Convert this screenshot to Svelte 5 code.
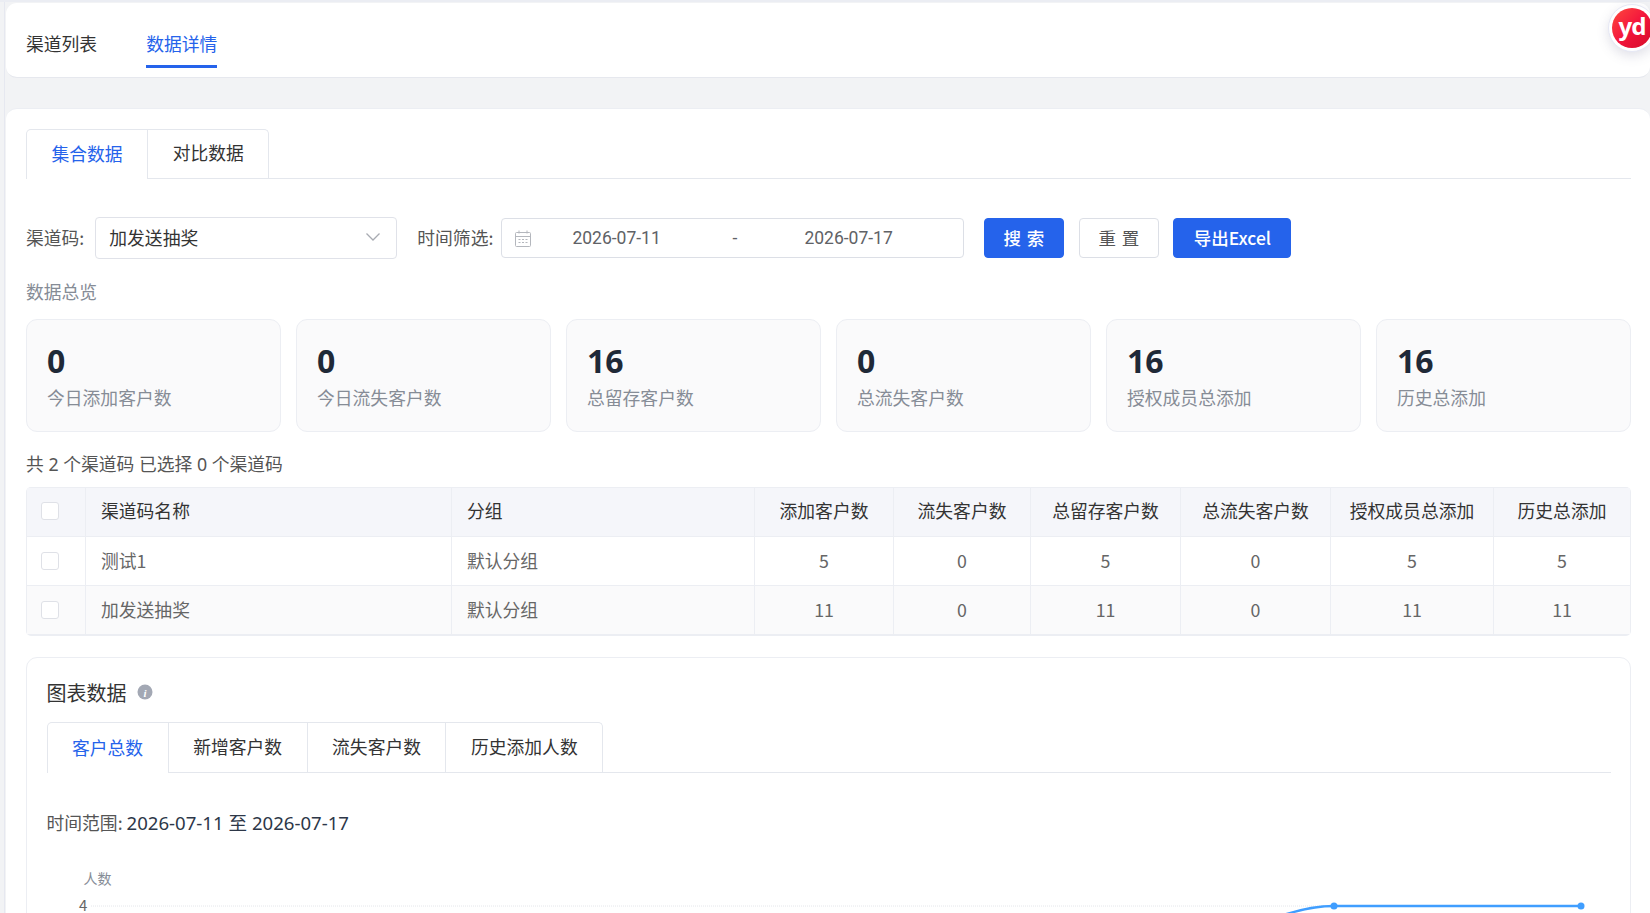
<script>
  const stats = [
    { n: '0', l: '今日添加客户数' },
    { n: '0', l: '今日流失客户数' },
    { n: '16', l: '总留存客户数' },
    { n: '0', l: '总流失客户数' },
    { n: '16', l: '授权成员总添加' },
    { n: '16', l: '历史总添加' }
  ];
  const heads = ['添加客户数', '流失客户数', '总留存客户数', '总流失客户数', '授权成员总添加', '历史总添加'];
  const rows = [
    { name: '测试1', group: '默认分组', v: [5, 0, 5, 0, 5, 5] },
    { name: '加发送抽奖', group: '默认分组', v: [11, 0, 11, 0, 11, 11] }
  ];
  const chartTabs = ['客户总数', '新增客户数', '流失客户数', '历史添加人数'];
</script>

<div class="page">
  <div class="logo"><span>yd</span></div>

  <header class="card top">
    <span class="toptab">渠道列表</span>
    <span class="toptab on">数据详情</span>
  </header>

  <main class="card body">
    <div class="tabs sub">
      <div class="tab on">集合数据</div>
      <div class="tab">对比数据</div>
    </div>

    <div class="filters">
      <label class="lbl">渠道码:</label>
      <div class="select">
        <span>加发送抽奖</span>
        <svg width="16" height="10" viewBox="0 0 16 10"><path d="M1.5 1.5 8 8l6.500-6.500" fill="none" stroke="#a8abb2" stroke-width="1.3"/></svg>
      </div>
      <label class="lbl time">时间筛选:</label>
      <div class="picker">
        <svg width="16" height="17" viewBox="0 0 16 17" fill="none" stroke="#b4b7bd">
          <rect x="0.500" y="2.500" width="15" height="14" rx="1"/>
          <path d="M0.500 6.500h15M4 0.500v3M12 0.500v3"/>
          <path d="M3.500 9.500h2M7 9.500h2M10.500 9.500h2M3.500 12.500h2M7 12.500h2M10.500 12.500h2" stroke-width="1"/>
        </svg>
        <span class="d1">2026-07-11</span>
        <span class="dash">-</span>
        <span class="d2">2026-07-17</span>
      </div>
      <button class="btn primary wide">搜 索</button>
      <button class="btn plain wide">重 置</button>
      <button class="btn primary last">导出Excel</button>
    </div>

    <div class="overview">数据总览</div>

    <div class="stats">
      {#each stats as s}
        <div class="stat">
          <div class="num">{s.n}</div>
          <div class="cap">{s.l}</div>
        </div>
      {/each}
    </div>

    <div class="count">共 2 个渠道码 已选择 0 个渠道码</div>

    <table>
      <colgroup>
        <col style="width:58px" /><col style="width:366px" /><col style="width:303px" /><col style="width:139px" />
        <col style="width:137px" /><col style="width:150px" /><col style="width:150px" /><col style="width:163px" /><col />
      </colgroup>
      <thead>
        <tr>
          <th class="chk"><i></i></th>
          <th class="l">渠道码名称</th>
          <th class="l">分组</th>
          {#each heads as h}<th>{h}</th>{/each}
        </tr>
      </thead>
      <tbody>
        {#each rows as r}
          <tr>
            <td class="chk"><i></i></td>
            <td class="l">{r.name}</td>
            <td class="l">{r.group}</td>
            {#each r.v as c}<td>{c}</td>{/each}
          </tr>
        {/each}
      </tbody>
    </table>

    <section class="chart">
      <div class="title">
        <span>图表数据</span>
        <svg width="16" height="16" viewBox="0 0 16 16"><circle cx="8" cy="8" r="7.500" fill="#a3a8b4"/><text x="8" y="12.500" text-anchor="middle" class="i">i</text></svg>
      </div>
      <div class="tabs ctabs">
        {#each chartTabs as t, i}
          <div class="tab" class:on={i === 0}>{t}</div>
        {/each}
      </div>
      <div class="range"><span class="rl">时间范围:</span> <span class="rv">2026-07-11 至 2026-07-17</span></div>
      <svg class="plot" width="1564" height="53" viewBox="0 0 1564 53">
        <text x="36.500" y="23" class="ax">人数</text>
        <text x="32" y="50" class="ay">4</text>
        <line x1="44" y1="45" x2="1534" y2="45" stroke="#e4e6ea" stroke-dasharray="1 1"/>
        <path d="M1220 60C1250 48 1270 45 1287 45L1534 45" fill="none" stroke="#409eff" stroke-width="2.500"/>
        <circle cx="1287" cy="45" r="3.500" fill="#409eff"/>
        <circle cx="1534" cy="45" r="3.500" fill="#409eff"/>
      </svg>
    </section>
  </main>
</div>

<style>
  :global(html), :global(body) {
    margin: 0;
    height: 913px;
    overflow: hidden;
    background: #f2f3f5;
  }
  .page {
    position: relative;
    height: 913px;
    box-sizing: border-box;
    padding: 3px 0 0 6px;
    overflow: hidden;
    background: #f2f3f5;
    font-family: "Noto Sans CJK SC", "Noto Sans", sans-serif;
    font-size: 17.800px;
    color: #333;
  }
  .page::before {
    content: '';
    position: absolute;
    left: 4px;
    top: 0;
    bottom: 0;
    width: 1px;
    background: #e6e8f0;
  }
  .page::after {
    content: '';
    position: absolute;
    left: 0;
    right: 0;
    top: 0;
    height: 2px;
    background: #ebedf3;
  }
  .card {
    background: #fff;
    border-radius: 11px 11px 0 0;
  }
  .top {
    height: 75px;
    box-sizing: border-box;
    border-radius: 11px;
    border-bottom: 1px solid #e6e8ee;
    padding-left: 20px;
    display: flex;
    gap: 49px;
    align-items: flex-start;
  }
  .toptab {
    height: 65px;
    box-sizing: border-box;
    padding-top: 27px;
    line-height: 26px;
    color: #333;
  }
  .toptab.on {
    color: #2563eb;
    border-bottom: 3px solid #2563eb;
  }
  .body {
    margin-top: 30px;
    height: 810px;
    box-sizing: border-box;
    padding: 19.500px 19px 0 20px;
    border-top: 1px solid #eceef3;
  }
  .tabs {
    display: flex;
    box-sizing: border-box;
    border-bottom: 1px solid #e4e7ed;
  }
  .tab {
    box-sizing: border-box;
    height: 100%;
    border: 1px solid #e4e7ed;
    border-left: 0;
    border-bottom: 0;
    display: flex;
    align-items: center;
    justify-content: center;
    padding: 0 24.500px 3px;
    color: #333;
  }
  .tab:first-child {
    border-left: 1px solid #e4e7ed;
    border-top-left-radius: 5px;
  }
  .tab:last-child {
    border-top-right-radius: 5px;
  }
  .tab.on {
    color: #2563eb;
    background: #fff;
    margin-bottom: -1px;
    height: calc(100% + 1px);
  }
  .sub {
    height: 50px;
  }
  .filters {
    margin-top: 38.500px;
    height: 42px;
    display: flex;
    align-items: center;
  }
  .lbl {
    color: #555;
    white-space: nowrap;
    padding-bottom: 2px;
  }
  .select {
    margin-left: 11px;
    width: 302px;
    height: 42px;
    box-sizing: border-box;
    border: 1px solid #e0e2e9;
    border-radius: 4px;
    display: flex;
    align-items: center;
    justify-content: space-between;
    padding: 0 15px 2px 13px;
    color: #333;
  }
  .time {
    margin-left: 20px;
  }
  .picker {
    margin-left: 8px;
    width: 463px;
    height: 40px;
    box-sizing: border-box;
    border: 1px solid #dcdfe6;
    border-radius: 4px;
    display: flex;
    align-items: center;
    padding-left: 13px;
    color: #606266;
    font-family: Roboto, "Noto Sans CJK SC", sans-serif;
    font-size: 17.500px;
  }
  .d1 {
    margin-left: 41px;
    width: 160px;
  }
  .dash {
    width: 72px;
  }
  .btn {
    height: 40px;
    box-sizing: border-box;
    border-radius: 4px;
    margin-left: 15px;
    padding: 0 0 2px;
    font: inherit;
    font-size: 17.500px;
    width: 118px;
  }
  .filters .btn.wide {
    width: 80px;
    letter-spacing: 1px;
  }
  .filters .picker + .btn {
    margin-left: 20px;
  }
  .filters .btn.last {
    margin-left: 14px;
  }
  .primary {
    background: #2563eb;
    border: 1px solid #2563eb;
    color: #fff;
    font-weight: 500;
  }
  .plain {
    background: #fff;
    border: 1px solid #dcdfe6;
    color: #555;
  }
  .overview {
    margin-top: 20px;
    line-height: 24px;
    color: #868c96;
  }
  .stats {
    margin-top: 16px;
    display: grid;
    grid-template-columns: repeat(6, 1fr);
    gap: 15px;
  }
  .stat {
    height: 113px;
    box-sizing: border-box;
    background: #fafafb;
    border: 1px solid #eceef3;
    border-radius: 11px;
    padding: 20px 0 0 20px;
  }
  .num {
    font-family: "Noto Sans", sans-serif;
    font-size: 32px;
    font-weight: 700;
    line-height: 42px;
    color: #1f2937;
  }
  .cap {
    margin-top: 3px;
    line-height: 24px;
    color: #868c96;
  }
  .count {
    margin-top: 19.500px;
    line-height: 24px;
    color: #555;
    font-family: "Noto Sans", "Noto Sans CJK SC", sans-serif;
  }
  table {
    margin-top: 11.500px;
    width: 1605px;
    table-layout: fixed;
    border-collapse: separate;
    border-spacing: 0;
    border: 1px solid #eceef3;
    border-bottom-width: 2px;
    border-radius: 5px;
    box-sizing: border-box;
  }
  th, td {
    height: 49px;
    box-sizing: border-box;
    padding: 0 0 2px;
    text-align: center;
    font-weight: 400;
    border-left: 1px solid #eceef3;
    border-top: 1px solid #eceef3;
  }
  th {
    height: 48px;
    padding-bottom: 4px;
    background: #f5f6fa;
    color: #333;
    border-top: 0;
  }
  td {
    color: #666;
  }
  th:first-child, td:first-child {
    border-left: 0;
  }
  tbody tr:nth-child(2) td {
    background: #fafafb;
  }
  .l, th.l {
    text-align: left;
    padding-left: 15px;
  }
  .chk, th.chk {
    text-align: left;
    padding-left: 14px;
    padding-bottom: 0;
  }
  th.chk {
    padding-bottom: 2px;
  }
  .chk i {
    display: block;
    width: 18px;
    height: 18px;
    box-sizing: border-box;
    background: #fff;
    border: 1px solid #dfe1e7;
    border-radius: 3px;
  }
  .chart {
    margin-top: 21px;
    height: 300px;
    box-sizing: border-box;
    border: 1px solid #eceef3;
    border-radius: 11px;
    padding: 20px 19.500px 0;
  }
  .title {
    height: 28px;
    display: flex;
    align-items: center;
    gap: 10px;
    font-size: 20px;
    color: #333;
  }
  .i {
    font: italic 700 11px "Liberation Serif", serif;
    fill: #fff;
  }
  .ctabs {
    margin-top: 16px;
    height: 51px;
  }
  .range {
    margin-top: 37px;
    line-height: 24px;
  }
  .rl {
    color: #555;
  }
  .rv {
    color: #2d3748;
    font-family: "Noto Sans", "Noto Sans CJK SC", sans-serif;
    font-size: 18.600px;
  }
  .plot {
    display: block;
    margin: 26px 0 0;
  }
  .ax {
    font-size: 14px;
    fill: #868c96;
  }
  .ay {
    font-size: 15px;
    fill: #666;
  }
  .logo {
    position: absolute;
    left: 1608px;
    top: 4px;
    width: 48px;
    height: 48px;
    box-sizing: border-box;
    border-radius: 50%;
    background: #fff;
    border: 1px solid #e6e8f5;
    box-shadow: 0 4px 12px rgba(90, 90, 130, 0.18);
    z-index: 2;
    display: flex;
    align-items: center;
    justify-content: center;
  }
  .logo span {
    width: 40px;
    height: 40px;
    border-radius: 50%;
    background: linear-gradient(135deg, #ff4a3d 0%, #f3153d 50%, #d40c28 100%);
    color: #fff;
    font: 700 24px/36px "Noto Sans", sans-serif;
    text-align: center;
    letter-spacing: -1px;
  }
</style>
